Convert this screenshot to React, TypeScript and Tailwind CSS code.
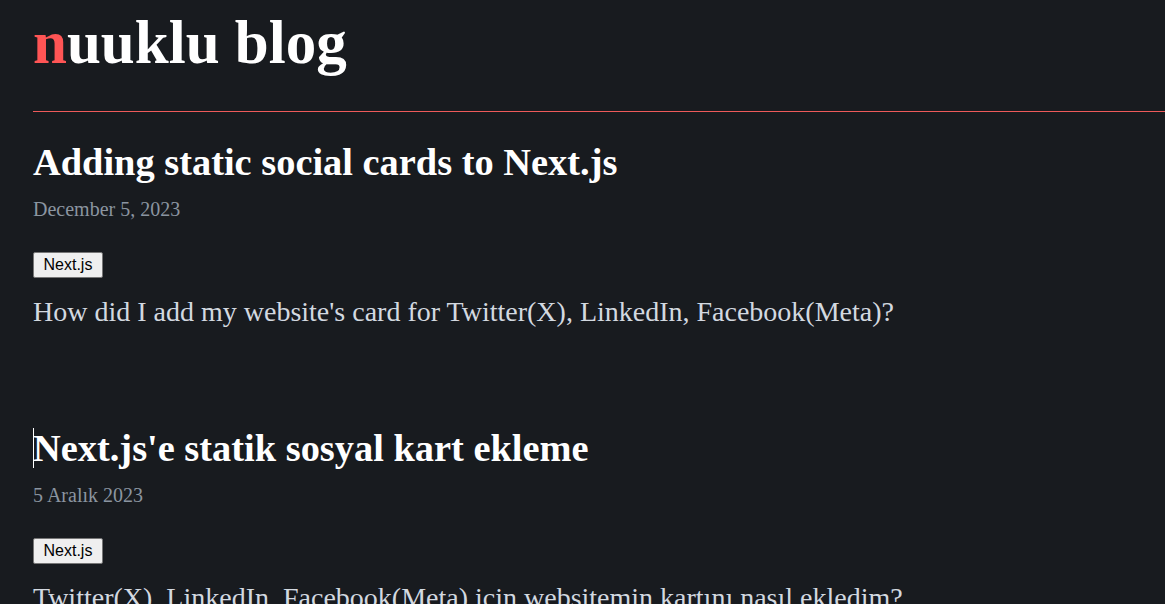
import React from "react";

const posts = [
  {
    title: "Adding static social cards to Next.js",
    date: "December 5, 2023",
    tag: "Next.js",
    excerpt: "How did I add my website's card for Twitter(X), LinkedIn, Facebook(Meta)?",
  },
  {
    title: "Next.js'e statik sosyal kart ekleme",
    date: "5 Aralık 2023",
    tag: "Next.js",
    excerpt: "Twitter(X), LinkedIn, Facebook(Meta) için websitemin kartını nasıl ekledim?",
  },
];

export default function App() {
  return (
    <div className="h-screen bg-[#181b1f] text-white font-['Liberation_Serif',serif] pl-[33px] overflow-hidden">
      <header className="border-b border-[#ee5a5a] pt-[8px] pb-[33px]">
        <h1 className="text-[61px] font-bold leading-[70px]">
          <span className="text-[#ff5555]">n</span>uuklu blog
        </h1>
      </header>
      <main>
        {posts.map((post, i) => (
          <article key={i} className="pt-[28px] pb-[65px]">
            <h2 className="text-[38.4px] font-bold leading-[44px] relative">
              {i === 1 && <span className="absolute left-0 top-[2px] w-px h-[40px] bg-white" />}
              {post.title}
            </h2>
            <p className="text-[20px] leading-[30px] text-[#8b95a0] mt-[10px]">{post.date}</p>
            <button className="mt-[28px] block bg-[#efefef] text-black border border-[#767676] rounded-[2px] px-[9.5px] h-[26px] text-[16px] font-['Liberation_Sans',Arial,sans-serif]">
              {post.tag}
            </button>
            <p className="text-[28px] leading-[42px] text-[#d3d9e0] mt-[13px] whitespace-nowrap">{post.excerpt}</p>
          </article>
        ))}
      </main>
    </div>
  );
}
